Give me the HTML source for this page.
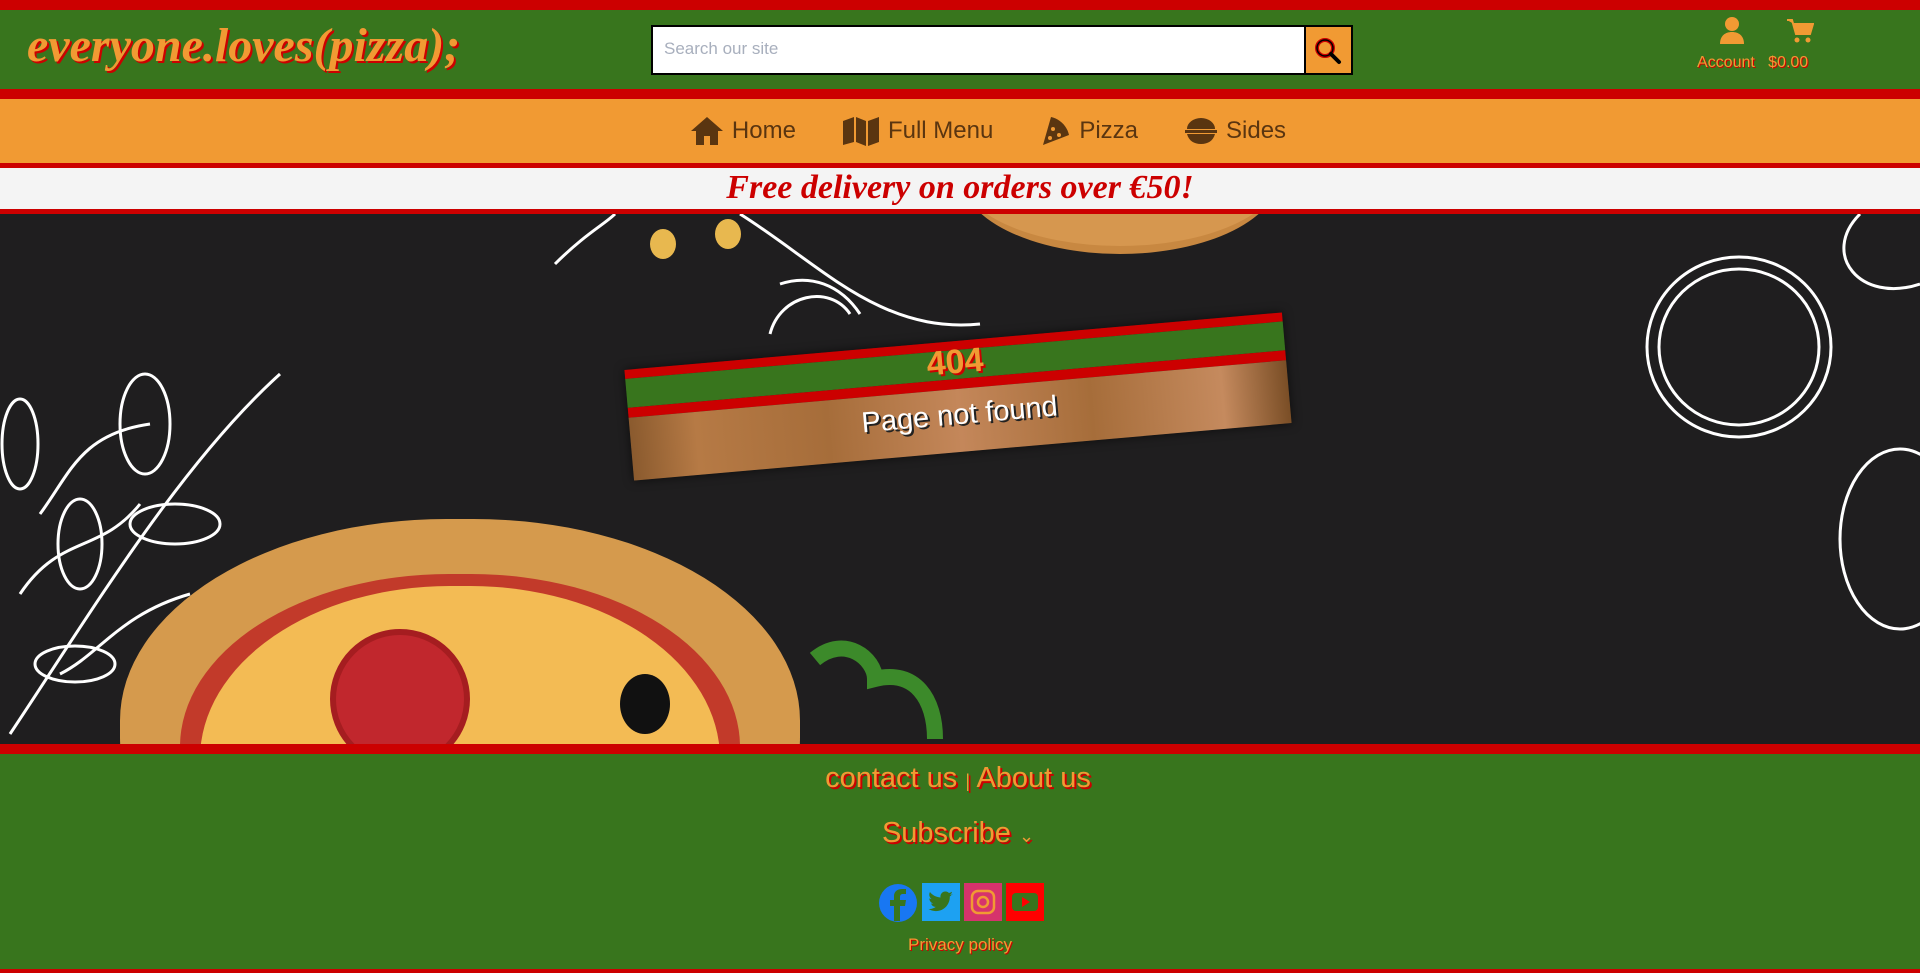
<!DOCTYPE html>
<html><head><meta charset="utf-8"><style>
*{margin:0;padding:0;box-sizing:border-box}
body{width:1920px;height:973px;overflow:hidden;background:#1f1e1f;font-family:"Liberation Sans",sans-serif;position:relative}
.abs{position:absolute}
.logo{left:27px;top:18px;font-size:48px;font-weight:bold;font-style:italic;color:#f19a33;text-shadow:2px 2px 0 #cc0000;font-family:"Liberation Serif",serif}
.nav{top:99px;height:64px;left:0;width:1920px;padding-left:56px;background:#f19a33;display:flex;justify-content:center;align-items:center;gap:46px;color:#5a3510;font-size:24px}
.nav span{display:flex;align-items:center;gap:8px}
.orange{color:#f19a33;text-shadow:2px 2px 0 #cc0000}
</style></head><body>
<div class="abs" style="top:0;left:0;width:1920px;height:10px;background:#cc0000"></div>
<div class="abs" style="top:10px;left:0;width:1920px;height:79px;background:#38751d"></div>
<div class="abs logo">everyone.loves(pizza);</div>
<div class="abs" style="left:651px;top:25px;width:702px;height:50px;border:2px solid #000;background:#fff"></div>
<div class="abs" style="left:664px;top:39px;color:#a8afbd;font-size:17px">Search our site</div>
<div class="abs" style="left:1304px;top:25px;width:49px;height:50px;background:#f19a33;border:2px solid #000"></div>
<svg class="abs" style="left:1314px;top:37px" width="28" height="28" viewBox="0 0 28 28"><circle cx="11" cy="11" r="8" fill="none" stroke="#cc0000" stroke-width="4"/><circle cx="11" cy="11" r="8" fill="none" stroke="#000" stroke-width="1.5"/><path d="M17 17l8 8" stroke="#000" stroke-width="4" stroke-linecap="round"/></svg>
<svg class="abs" style="left:1718px;top:16px" width="28" height="30" viewBox="0 0 28 30"><circle cx="14" cy="8" r="7" fill="#f19a33"/><path d="M2 28c0-8 5-12 12-12s12 4 12 12z" fill="#f19a33"/></svg>
<svg class="abs" style="left:1786px;top:18px" width="28" height="26" viewBox="0 0 28 26"><path d="M1 2h5l4 14h14l3-10H8" fill="#f19a33" stroke="#f19a33" stroke-width="2"/><circle cx="11" cy="22" r="2.5" fill="#f19a33"/><circle cx="22" cy="22" r="2.5" fill="#f19a33"/></svg>
<div class="abs orange" style="left:1697px;top:54px;font-size:16px;text-shadow:1px 1px 0 #cc0000">Account&nbsp;&nbsp;&nbsp;$0.00</div>
<div class="abs" style="top:89px;left:0;width:1920px;height:10px;background:#cc0000"></div>
<div class="abs nav">
<span><svg width="34" height="30" viewBox="0 0 34 30"><path d="M17 1L1 15h5v14h8v-9h6v9h8V15h5z" fill="#5a3510"/></svg>Home</span>
<span><svg width="38" height="30" viewBox="0 0 38 30"><path d="M1 5l11-4v25L1 29zM14 1l10 4v25l-10-4zM26 5l11-4v25l-11 4z" fill="#5a3510"/></svg>Full Menu</span>
<span><svg width="32" height="32" viewBox="0 0 32 32"><path d="M4 30L12 2c9 2 16 9 18 18z" fill="#5a3510"/><circle cx="14" cy="14" r="2" fill="#f19a33"/><circle cx="11" cy="23" r="2" fill="#f19a33"/><circle cx="20" cy="20" r="2" fill="#f19a33"/></svg>Pizza</span>
<span><svg width="34" height="28" viewBox="0 0 34 28"><path d="M3 12a14 11 0 0 1 28 0z" fill="#5a3510"/><rect x="1" y="13" width="32" height="3" fill="#5a3510"/><path d="M3 17h28c-2 7-7 10-14 10S5 24 3 17z" fill="#5a3510"/></svg>Sides</span>
</div>
<div class="abs" style="top:163px;left:0;width:1920px;height:5px;background:#cc0000"></div>
<div class="abs" style="top:168px;left:0;width:1920px;height:41px;background:#f4f4f4;text-align:center;color:#cc0000;font-size:34px;font-weight:bold;font-style:italic;line-height:40px;font-family:'Liberation Serif',serif">Free delivery on orders over €50!</div>
<div class="abs" style="top:209px;left:0;width:1920px;height:5px;background:#cc0000"></div>
<div class="abs" style="left:0;top:214px;width:1920px;height:530px;overflow:hidden">
<div class="abs" style="left:960px;top:-120px;width:320px;height:160px;border-radius:50%;background:#d6974f;border-bottom:8px solid #c88841"></div>
<div class="abs" style="left:120px;top:305px;width:680px;height:420px;border-radius:48%;background:#d59a4d"></div>
<div class="abs" style="left:180px;top:360px;width:560px;height:360px;border-radius:48%;background:#c23a2a"></div>
<div class="abs" style="left:200px;top:372px;width:520px;height:360px;border-radius:48%;background:#f3bb54"></div>
<div class="abs" style="left:330px;top:415px;width:140px;height:140px;border-radius:50%;background:#c1272d;border:6px solid #a51d20"></div>
<div class="abs" style="left:620px;top:460px;width:50px;height:60px;border-radius:50%;background:#111"></div>
<div class="abs" style="left:650px;top:15px;width:26px;height:30px;border-radius:50%;background:#e8b84f"></div>
<div class="abs" style="left:715px;top:5px;width:26px;height:30px;border-radius:50%;background:#e8b84f"></div>
<svg class="abs" style="left:0;top:0" width="1920" height="530" fill="none" stroke="#fff" stroke-width="3">
<ellipse cx="1739" cy="133" rx="92" ry="90"/><ellipse cx="1739" cy="133" rx="80" ry="78"/>
<ellipse cx="1900" cy="325" rx="60" ry="90"/>
<path d="M1860 0c-40 40 0 90 60 70"/>
<path d="M10 520C90 400 180 250 280 160M20 380c40-60 80-40 120-90M40 300c30-40 40-80 110-90M60 460c40-20 60-60 130-80"/>
<ellipse cx="145" cy="210" rx="25" ry="50"/><ellipse cx="80" cy="330" rx="22" ry="45"/><ellipse cx="20" cy="230" rx="18" ry="45"/><ellipse cx="175" cy="310" rx="45" ry="20"/><ellipse cx="75" cy="450" rx="40" ry="18"/>
<path d="M555 50c30-30 50-40 60-50M740 0c80 50 140 120 240 110M780 70c30-10 60 0 80 30"/>
<path d="M770 120c10-40 60-50 80-20"/>
</svg>
<svg class="abs" style="left:810px;top:420px" width="150" height="120"><path d="M5 25c30-25 60 0 60 20c40-10 60 20 60 60" stroke="#3c8a2a" stroke-width="16" fill="none"/></svg>
</div>
<div class="abs" style="left:628px;top:341px;width:660px;height:111px;transform:rotate(-5deg);box-shadow:0 0 10px rgba(0,0,0,.6)">
<div style="height:9px;background:#cc0000"></div>
<div style="height:29px;background:#38751d"></div>
<div style="height:10px;background:#cc0000"></div>
<div style="height:63px;background:linear-gradient(90deg,#8a5a2e,#b67a45 10%,#a66d3a 30%,#c4875a 50%,#a66d3a 70%,#c58a5e 90%,#7a4e26)"></div>
<div class="abs orange" style="left:0;top:2px;width:660px;text-align:center;font-size:34px;font-weight:bold">404</div>
<div class="abs" style="left:0;top:58px;width:660px;text-align:center;font-size:29px;color:#fff;text-shadow:2px 2px 0 #222">Page not found</div>
</div>
<div class="abs" style="top:744px;left:0;width:1920px;height:10px;background:#cc0000"></div>
<div class="abs" style="top:754px;left:0;width:1920px;height:215px;background:#38751d"></div>
<div class="abs orange" style="top:762px;left:-2px;width:1920px;text-align:center;font-size:29px">contact us <span style="font-size:18px">|</span> About us</div>
<div class="abs orange" style="top:817px;left:-2px;width:1920px;text-align:center;font-size:29px">Subscribe <span style="font-size:18px">⌄</span></div>
<div class="abs" style="top:883px;left:878px;display:flex;gap:4px">
<svg width="40" height="40" viewBox="0 0 40 40"><circle cx="20" cy="20" r="19" fill="#1877f2"/><path d="M22 38V23h5l1-6h-6v-3c0-2 1-3 3-3h3V6h-4c-5 0-8 3-8 7v4h-4v6h4v15z" fill="#38751d"/></svg>
<svg width="38" height="38" viewBox="0 0 38 38"><rect width="38" height="38" fill="#1da1f2"/><path d="M31 11c-1 .5-2 .7-3 .8 1-.7 2-1.7 2-3-1 .6-2 1-3 1.2a5 5 0 0 0-8.5 4.5C14 14 10 12 8 9c-1.5 2.5-.5 5.5 1.5 7-1 0-1.5-.3-2.2-.6 0 2.5 1.800 4.5 4 5-.8.2-1.5.2-2.2.1.6 2 2.5 3.4 4.7 3.4-2 1.6-5 2.4-7.500 2 2.2 1.4 4.8 2.2 7.5 2.2 9 0 14-7.500 14-14v-.6c1-.7 1.8-1.5 2.5-2.5z" fill="#38751d"/></svg>
<svg width="38" height="38" viewBox="0 0 38 38"><rect width="38" height="38" fill="#d6336c"/><rect x="8" y="8" width="22" height="22" rx="6" fill="none" stroke="#f19a33" stroke-width="2.5"/><circle cx="19" cy="19" r="5" fill="none" stroke="#f19a33" stroke-width="2.5"/></svg>
<svg width="38" height="38" viewBox="0 0 38 38"><rect width="38" height="38" fill="#f00"/><rect x="6" y="10" width="26" height="18" rx="4" fill="#38751d"/><path d="M16 14l8 5-8 5z" fill="#f00"/></svg>
</div>
<div class="abs orange" style="top:935px;left:0;width:1920px;text-align:center;font-size:17px;text-shadow:1px 1px 0 #cc0000">Privacy policy</div>
<div class="abs" style="top:969px;left:0;width:1920px;height:4px;background:#cc0000"></div>
</body></html>
